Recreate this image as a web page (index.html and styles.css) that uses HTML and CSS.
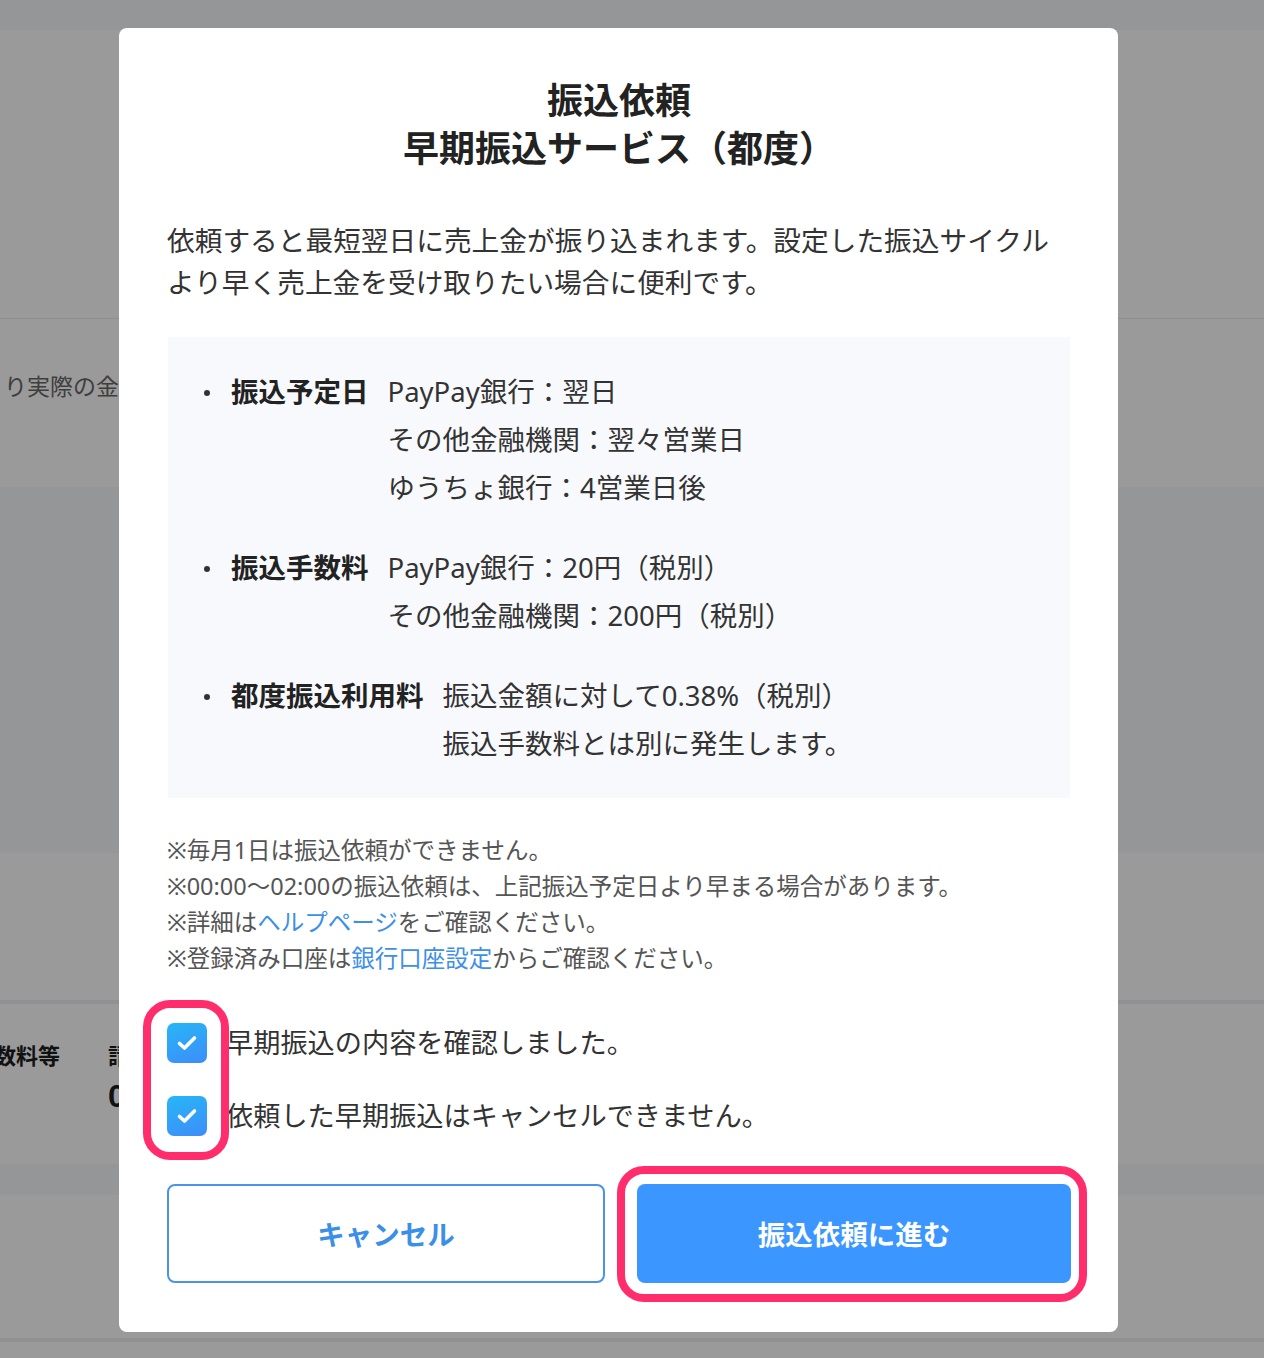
FILE: index.html
```html
<!DOCTYPE html>
<html lang="ja">
<head>
<meta charset="utf-8">
<title>振込依頼</title>
<link rel="stylesheet" href="styles.css">
</head>
<body>
<div class="bg">
  <div class="bg-top"></div>
  <div class="bg-a"></div>
  <div class="bg-b"><span class="bg-text">り実際の金</span></div>
  <div class="bg-c"></div>
  <div class="bg-d"></div>
  <div class="bg-line"></div>
  <div class="bg-e">
    <div class="bg-col1">数料等</div>
    <div class="bg-col2">
      <div class="bg-col2-label">請</div>
      <div class="bg-col2-num">0</div>
    </div>
  </div>
  <div class="bg-f"></div>
  <div class="bg-g"></div>
  <div class="bg-line"></div>
  <div class="bg-h"></div>
</div>

<div class="modal">
  <h1 class="modal-title">振込依頼<br>早期振込サービス（都度）</h1>
  <p class="modal-desc">依頼すると最短翌日に売上金が振り込まれます。設定した振込サイクル<br>より早く売上金を受け取りたい場合に便利です。</p>

  <div class="info">
    <div class="info-item">
      <span class="bullet"></span>
      <span class="info-label">振込予定日</span>
      <div class="info-value">
        <div>PayPay銀行：翌日</div>
        <div>その他金融機関：翌々営業日</div>
        <div>ゆうちょ銀行：4営業日後</div>
      </div>
    </div>
    <div class="info-item">
      <span class="bullet"></span>
      <span class="info-label">振込手数料</span>
      <div class="info-value">
        <div>PayPay銀行：20円（税別）</div>
        <div>その他金融機関：200円（税別）</div>
      </div>
    </div>
    <div class="info-item">
      <span class="bullet"></span>
      <span class="info-label">都度振込利用料</span>
      <div class="info-value">
        <div>振込金額に対して0.38%（税別）</div>
        <div>振込手数料とは別に発生します。</div>
      </div>
    </div>
  </div>

  <div class="notes">
    <div>※毎月1日は振込依頼ができません。</div>
    <div>※00:00〜02:00の振込依頼は、上記振込予定日より早まる場合があります。</div>
    <div>※詳細は<a class="link" href="#">ヘルプページ</a>をご確認ください。</div>
    <div>※登録済み口座は<a class="link" href="#">銀行口座設定</a>からご確認ください。</div>
  </div>

  <div class="checks">
    <label class="check-row">
      <span class="checkbox"><svg viewBox="0 0 40 40" width="40" height="40"><polyline points="12.5,20.5 17.5,25 27.5,15" fill="none" stroke="#fff" stroke-width="3.6" stroke-linecap="round" stroke-linejoin="round"/></svg></span>
      <span class="check-text">早期振込の内容を確認しました。</span>
    </label>
    <label class="check-row">
      <span class="checkbox"><svg viewBox="0 0 40 40" width="40" height="40"><polyline points="12.5,20.5 17.5,25 27.5,15" fill="none" stroke="#fff" stroke-width="3.6" stroke-linecap="round" stroke-linejoin="round"/></svg></span>
      <span class="check-text">依頼した早期振込はキャンセルできません。</span>
    </label>
  </div>

  <div class="buttons">
    <button class="btn btn-cancel">キャンセル</button>
    <button class="btn btn-primary">振込依頼に進む</button>
  </div>
</div>

<div class="highlight highlight-checks"></div>
<div class="highlight highlight-button"></div>
</body>
</html>
```

FILE: styles.css
```css
* { box-sizing: border-box; }

html, body {
  margin: 0;
  padding: 0;
}

body {
  width: 1264px;
  height: 1358px;
  overflow: hidden;
  position: relative;
  background: #9a9a9a;
  font-family: "Noto Sans", "Noto Sans CJK JP", sans-serif;
  color: #333;
}

/* dimmed background page */
.bg { width: 100%; }
.bg-top { height: 30px; background: #959698; }
.bg-a { height: 289px; background: #9a9a9a; border-bottom: 1px solid #8e8e8e; }
.bg-b {
  height: 168px;
  background: #9a9a9a;
  padding-top: 49px;
  padding-left: 4px;
}
.bg-text {
  font-family: "Noto Sans CJK JP", sans-serif;
  font-size: 23px;
  line-height: 34px;
  color: #3e3e3e;
}
.bg-c { height: 366px; background: #959698; }
.bg-d { height: 147px; background: #9a9a9a; }
.bg-line { height: 4px; background: #909193; }
.bg-e {
  height: 160px;
  background: #9a9a9a;
  display: flex;
  padding-top: 35px;
  font-family: "Noto Sans CJK JP", sans-serif;
}
.bg-col1 {
  margin-left: -6px;
  font-size: 22px;
  line-height: 30px;
  font-weight: 700;
  color: #111;
}
.bg-col2 {
  margin-left: 48px;
  color: #111;
  font-weight: 700;
}
.bg-col2-label { font-size: 22px; line-height: 30px; }
.bg-col2-num {
  font-family: "Liberation Sans", sans-serif;
  font-size: 32px;
  line-height: 36px;
  margin-top: 9px;
}
.bg-f { height: 31px; background: #959698; }
.bg-g { height: 143px; background: #9a9a9a; }
.bg-h { height: 20px; background: #9a9a9a; }

/* modal */
.modal {
  position: absolute;
  left: 119px;
  top: 28px;
  width: 999px;
  height: 1304px;
  background: #fff;
  border-radius: 8px;
  padding: 46px 47px 49px 48px;
}

.modal-title {
  margin: 0;
  text-align: center;
  font-family: "Noto Sans CJK JP", sans-serif;
  font-size: 36px;
  line-height: 48px;
  font-weight: 700;
  color: #222;
}

.modal-desc {
  margin: 49px 0 0;
  font-size: 27.7px;
  line-height: 42px;
  color: #333;
  white-space: nowrap;
}

.info {
  margin: 34px 1px 0;
  background: #f8f9fc;
  padding: 31px 0 30px 36px;
  display: flex;
  flex-direction: column;
  gap: 32px;
}

.info-item {
  display: flex;
  align-items: flex-start;
  font-size: 27.5px;
  line-height: 48px;
  color: #333;
}

.bullet {
  width: 27px;
  height: 48px;
  flex: none;
  display: flex;
  align-items: center;
}
.bullet::before {
  content: "";
  width: 6px;
  height: 6px;
  border-radius: 50%;
  background: #333;
  margin-top: 2px;
}

.info-label {
  font-weight: 700;
  color: #222;
  margin-right: 19px;
  white-space: nowrap;
}

.info-value { white-space: nowrap; }

.notes {
  margin-top: 34px;
  font-size: 23.5px;
  line-height: 36px;
  color: #555;
  white-space: nowrap;
}

.link {
  color: #3d8fe8;
  text-decoration: none;
}

.checks {
  margin-top: 47px;
  display: flex;
  flex-direction: column;
  gap: 33px;
}

.check-row {
  display: flex;
  align-items: center;
  gap: 19px;
  height: 40px;
}

.checkbox {
  width: 40px;
  height: 40px;
  flex: none;
  border-radius: 7px;
  background: linear-gradient(160deg, #27b6f7 0%, #3d8df8 100%);
  display: block;
}
.checkbox svg { display: block; }

.check-text {
  font-size: 27.2px;
  line-height: 40px;
  color: #333;
  white-space: nowrap;
}

.buttons {
  margin-top: 48px;
  display: flex;
  gap: 32px;
}

.btn {
  flex: 1;
  height: 99px;
  border-radius: 8px;
  font-family: "Noto Sans CJK JP", sans-serif;
  font-size: 27.5px;
  font-weight: 700;
  cursor: pointer;
  padding-bottom: 2px;
}

.btn-cancel {
  background: #fff;
  border: 2px solid #4a93e6;
  color: #3b8fe6;
}

.btn-primary {
  background: #3b96ff;
  border: none;
  color: #fff;
}

/* annotation highlights */
.highlight {
  position: absolute;
  border: 8px solid #ff2d6c;
  border-radius: 27px;
  pointer-events: none;
}
.highlight-checks {
  left: 143px;
  top: 1000px;
  width: 86px;
  height: 160px;
}
.highlight-button {
  left: 617px;
  top: 1166px;
  width: 470px;
  height: 136px;
}
```
